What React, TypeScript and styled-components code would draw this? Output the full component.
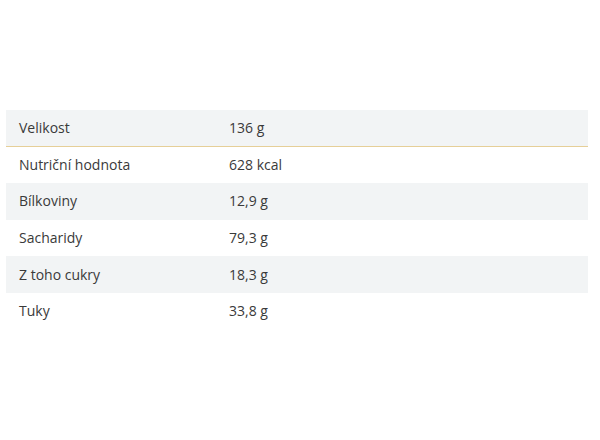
import { FunctionComponent } from "react";
import styled, { createGlobalStyle } from "styled-components";

const GlobalStyle = createGlobalStyle`
    html, body {
        margin: 0;
        padding: 0;
        background: #fff;
    }
    body {
        font-family: "Open Sans", "Liberation Sans", sans-serif;
        color: #333;
    }
`;

const Page = styled.div`
    width: 600px;
    height: 440px;
    padding: 110px 12px 0 6px;
    box-sizing: border-box;
`;

const Table = styled.div`
    display: flex;
    flex-direction: column;
    width: 582px;
`;

const Row = styled.div<{ $striped: boolean; $underline?: boolean }>`
    display: grid;
    grid-template-columns: 210px 1fr;
    align-items: center;
    height: 36.6px;
    padding-left: 13px;
    box-sizing: border-box;
    background: ${({ $striped }) => ($striped ? "#f2f4f5" : "#fff")};
    border-bottom: ${({ $underline }) => ($underline ? "1px solid #e6cf98" : "none")};
`;

const Label = styled.span`
    font-size: 14px;
    line-height: 20px;
    color: #3a3a3a;
`;

const Value = styled(Label)``;

const rows: [string, string][] = [
    ["Velikost", "136 g"],
    ["Nutriční hodnota", "628 kcal"],
    ["Bílkoviny", "12,9 g"],
    ["Sacharidy", "79,3 g"],
    ["Z toho cukry", "18,3 g"],
    ["Tuky", "33,8 g"],
];

const App: FunctionComponent = () => {
    return <Page>
        <GlobalStyle />
        <Table>
            {rows.map(([label, value], i) =>
                <Row key={label} $striped={i % 2 === 0} $underline={i === 0}>
                    <Label>{label}</Label>
                    <Value>{value}</Value>
                </Row>
            )}
        </Table>
    </Page>;
}

export default App;
